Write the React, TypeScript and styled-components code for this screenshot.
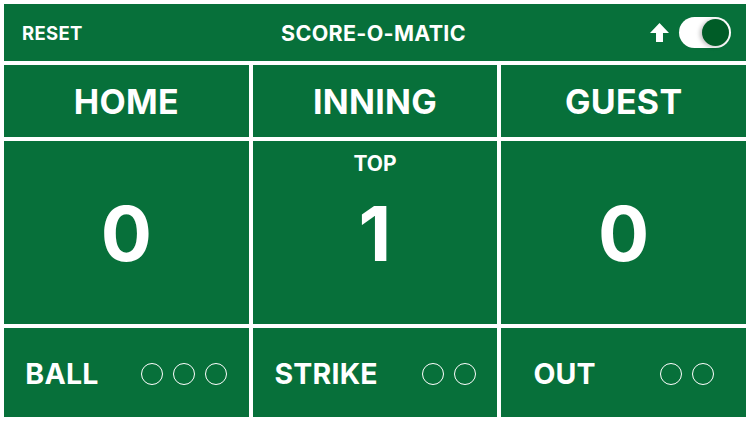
import React from "react";
import styled, { createGlobalStyle } from "styled-components";

const GREEN = "#07703a";
const DARK = "#005c27";

const Global = createGlobalStyle`
  html, body { margin: 0; padding: 0; background: #ffffff; }
  body { font-family: Inter, "Liberation Sans", Arial, sans-serif; }
`;

const Board = styled.div`
  width: 750px;
  height: 422px;
  box-sizing: border-box;
  padding: 4px 4px 5px 4px;
  display: grid;
  grid-template-columns: 1fr 1fr 1fr;
  grid-template-rows: 57px 72px 183px 89px;
  gap: 4px;
  background: #ffffff;
  color: #ffffff;
  font-weight: 700;
`;

const TopBar = styled.div`
  grid-column: 1 / 4;
  background: ${GREEN};
  display: grid;
  grid-template-columns: 1fr auto 1fr;
  align-items: center;
  padding: 0 15px 0 18px;
`;

const ResetButton = styled.div`
  font-size: 18.5px;
  letter-spacing: 0.3px;
  justify-self: start;
`;

const Title = styled.div`
  font-size: 21.5px;
  letter-spacing: 0.3px;
  margin-right: 6px;
`;

const Controls = styled.div`
  justify-self: end;
  display: flex;
  align-items: center;
  gap: 10px;
`;

const Toggle = styled.div`
  width: 52px;
  height: 31px;
  border-radius: 16px;
  background: #ffffff;
  display: flex;
  align-items: center;
  justify-content: flex-end;
  padding: 0 2px;
  box-sizing: border-box;
`;

const Knob = styled.div`
  width: 27px;
  height: 27px;
  border-radius: 50%;
  background: ${DARK};
  box-shadow: -2px 1px 4px rgba(0, 0, 0, 0.25);
`;

const Cell = styled.div`
  background: ${GREEN};
  display: flex;
  align-items: center;
  justify-content: center;
`;

const Heading = styled(Cell)`
  font-size: 34px;
  letter-spacing: 0.3px;
`;

const ScoreCell = styled.div`
  background: ${GREEN};
  display: grid;
  grid-template-rows: 1fr auto 1fr;
  justify-items: center;
`;

const Sub = styled.div`
  align-self: start;
  padding-top: 10px;
  font-size: 21px;
`;

const Score = styled.div`
  grid-row: 2;
  font-size: 76px;
  line-height: 1;
`;

const CountCell = styled.div`
  background: ${GREEN};
  display: flex;
  align-items: center;
  justify-content: space-around;
  padding-top: 2px;
`;

const CountLabel = styled.div`
  font-size: 28.5px;
  letter-spacing: 0.2px;
`;

const Dots = styled.div`
  display: flex;
  gap: 10px;
`;

const Dot = styled.div<{ $on?: boolean }>`
  width: 22px;
  height: 22px;
  box-sizing: border-box;
  border-radius: 50%;
  border: 1.6px solid #ffffff;
  background: ${(p) => (p.$on ? "#ffffff" : "transparent")};
`;

const Arrow = () => (
  <svg width="19" height="19" viewBox="0 0 18 18">
    <path d="M9 0 L18 9.5 L12.3 9.5 L12.3 18 L5.7 18 L5.7 9.5 L0 9.5 Z" fill="#ffffff" />
  </svg>
);

const Count = ({ label, n }: { label: string; n: number }) => (
  <CountCell>
    <CountLabel>{label}</CountLabel>
    <Dots>
      {Array.from({ length: n }).map((_, i) => (
        <Dot key={i} />
      ))}
    </Dots>
  </CountCell>
);

export default function App() {
  return (
    <>
      <Global />
      <Board>
        <TopBar>
          <ResetButton>RESET</ResetButton>
          <Title>SCORE-O-MATIC</Title>
          <Controls>
            <Arrow />
            <Toggle>
              <Knob />
            </Toggle>
          </Controls>
        </TopBar>
        <Heading>HOME</Heading>
        <Heading>INNING</Heading>
        <Heading>GUEST</Heading>
        <ScoreCell>
          <Score>0</Score>
        </ScoreCell>
        <ScoreCell>
          <Sub>TOP</Sub>
          <Score>1</Score>
        </ScoreCell>
        <ScoreCell>
          <Score>0</Score>
        </ScoreCell>
        <Count label="BALL" n={3} />
        <Count label="STRIKE" n={2} />
        <Count label="OUT" n={2} />
      </Board>
    </>
  );
}
